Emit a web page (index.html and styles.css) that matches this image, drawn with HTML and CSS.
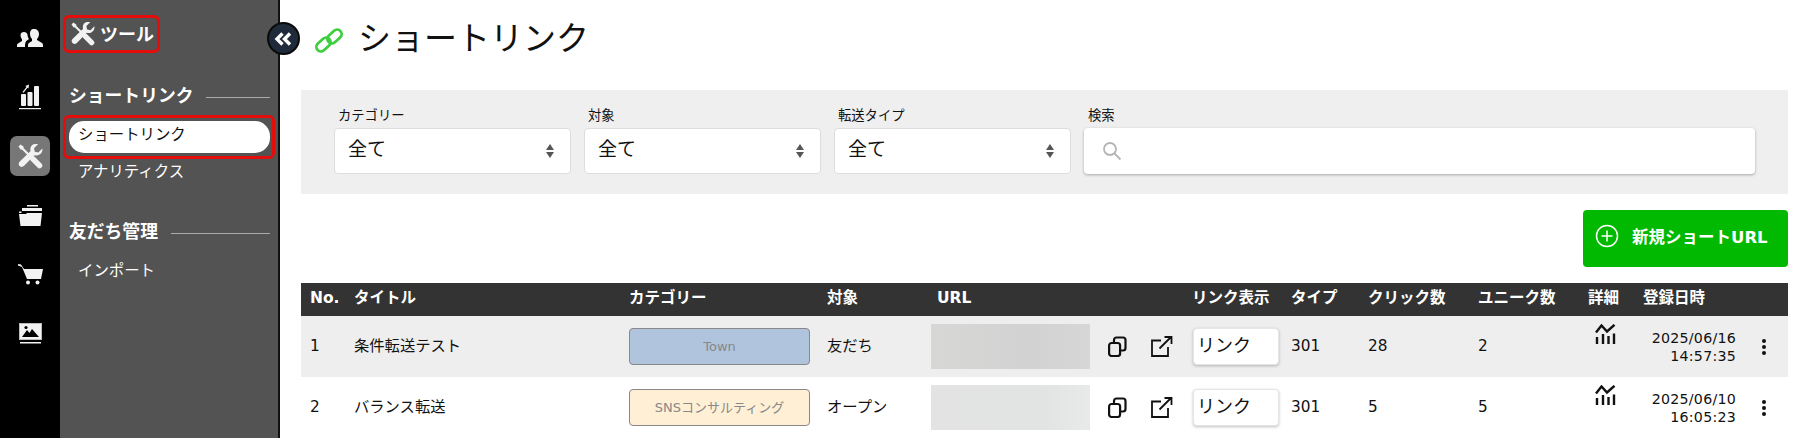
FILE: index.html
```html
<!DOCTYPE html>
<html lang="ja">
<head>
    <meta charset="UTF-8">
    <title>ショートリンク</title>
    <link rel="stylesheet" href="styles.css">
</head>
<body>
    <div class="app">
        <!-- icon rail -->
        <nav class="rail">
            <a class="rail-item">
                <svg width="26" height="20" viewBox="0 0 26 20" fill="#f2f2f2"><path d="M17 1c3 0 5 2 5 5 0 2-1 4-2 5v1l5 3c1 .5 1 2 1 4H11c0-2 0-3.500 1-4l3-2v-2c-1-1-2-3-2-5 0-3 1-5 4-5z"/><path d="M7 4c2 0 3 1 3.500 2.500C10.500 8 11 10 12 11l-2 1.500c-1 .5-2 2-2 6.500H0c0-2 0-3 1-3.500l4-2.500v-1.500C4 10 3.500 8.500 3.500 7 3.500 5 5 4 7 4z"/></svg>
            </a>
            <a class="rail-item">
                <svg width="22" height="26" viewBox="0 0 22 26" fill="#f2f2f2"><rect x="2" y="10" width="5" height="12" rx="1"/><rect x="8.500" y="8" width="5" height="14" rx="1"/><rect x="15" y="2" width="5" height="20" rx="1"/><path d="M3.500 8l4-5-1.200-1L10 .5 9.500 4.500 8.500 3.700l-4 5z"/><rect x="0" y="24" width="22" height="1.200"/></svg>
            </a>
            <a class="rail-item active">
                <svg width="25" height="25" viewBox="0 0 25 25"><use href="#tools"/></svg>
            </a>
            <a class="rail-item">
                <svg width="25" height="21" viewBox="0 0 25 21" fill="#f2f2f2"><rect x="9" y="0" width="11" height="1.500"/><path d="M4 3h20v3H4z"/><path d="M1 6.500h2.500V8H1z"/><path d="M1 9h7l1-1h15l-1.500 13H2.500z"/></svg>
            </a>
            <a class="rail-item">
                <svg width="25" height="21" viewBox="0 0 25 21" fill="#f2f2f2"><path d="M0 0l3 .5 3 4.500h19l-2 10H9L4 3 0 1.500z"/><circle cx="10" cy="18.500" r="2"/><circle cx="19.500" cy="18.500" r="2"/></svg>
            </a>
            <a class="rail-item">
                <svg width="23" height="21" viewBox="0 0 23 21"><rect x="0.500" y="0.500" width="22" height="16" fill="#f2f2f2" stroke="#bbb"/><path d="M3 14l5-7 2.500 3L13 6l7 8z" fill="#000"/><circle cx="7" cy="4.500" r="1.600" fill="#000"/><rect x="1" y="19" width="21" height="1.500" fill="#f2f2f2"/></svg>
            </a>
        </nav>

        <!-- side menu -->
        <aside class="side">
            <div class="side-title mark">
                <svg width="24" height="24" viewBox="0 0 25 25"><use href="#tools"/></svg>
                <span>ツール</span>
            </div>
            <div class="side-head"><span>ショートリンク</span></div>
            <div class="side-active mark"><a>ショートリンク</a></div>
            <a class="side-link">アナリティクス</a>
            <div class="side-head second"><span>友だち管理</span></div>
            <a class="side-link">インポート</a>
            <button class="collapse" type="button">
                <svg width="19" height="14" viewBox="0 0 19 14" fill="none" stroke="#fff" stroke-width="3.400"><path d="M8.500 1.500L3 7l5.500 5.500M16 1.500L10.500 7l5.500 5.500"/></svg>
            </button>
        </aside>

        <main class="main">
            <h1 class="page-title">
                <svg width="30" height="25" viewBox="0 0 30 25" fill="none" stroke="#3fce3f" stroke-width="2.800">
                    <rect x="1.500" y="12" width="16" height="9" rx="4.500" transform="rotate(-42 9.500 16.500)"/>
                    <rect x="12.500" y="4" width="16" height="9" rx="4.500" transform="rotate(-42 20.500 8.500)"/>
                </svg>
                ショートリンク
            </h1>

            <form class="filters">
                <div class="field">
                    <label>カテゴリー</label>
                    <div class="select-wrap"><select><option>全て</option></select></div>
                </div>
                <div class="field">
                    <label>対象</label>
                    <div class="select-wrap"><select><option>全て</option></select></div>
                </div>
                <div class="field">
                    <label>転送タイプ</label>
                    <div class="select-wrap"><select><option>全て</option></select></div>
                </div>
                <div class="field search">
                    <label>検索</label>
                    <div class="search-box">
                        <svg width="20" height="20" viewBox="0 0 20 20" fill="none" stroke="#b5b5b5" stroke-width="1.800"><circle cx="8" cy="8" r="6"/><path d="M12.500 12.500l6 6"/></svg>
                        <input type="text">
                    </div>
                </div>
            </form>

            <div class="actions">
                <button class="btn-new" type="button">
                    <svg width="24" height="24" viewBox="0 0 24 24" fill="none" stroke="#fff" stroke-width="1.500"><circle cx="12" cy="12" r="10.500"/><path d="M12 6.500v11M6.500 12h11"/></svg>
                    新規ショートURL
                </button>
            </div>

            <table class="links">
                <colgroup>
                    <col class="c-no"><col class="c-title"><col class="c-cat"><col class="c-target"><col class="c-url">
                    <col class="c-tools"><col class="c-show"><col class="c-type"><col class="c-count"><col class="c-count">
                    <col class="c-detail"><col class="c-date"><col class="c-more">
                </colgroup>
                <thead>
                    <tr>
                        <th>No.</th><th>タイトル</th><th>カテゴリー</th><th>対象</th><th class="th-url">URL</th><th></th>
                        <th>リンク表示</th><th>タイプ</th><th>クリック数</th><th>ユニーク数</th><th>詳細</th><th>登録日時</th><th></th>
                    </tr>
                </thead>
                <tbody>
                    <tr class="odd">
                        <td>1</td>
                        <td>条件転送テスト</td>
                        <td class="box"><span class="tag tag-blue">Town</span></td>
                        <td>友だち</td>
                        <td class="box td-url"><div class="url-mask mask-dark"></div></td>
                        <td class="box td-tools"><div class="url-tools">
                            <svg width="19" height="21"><use href="#copy"/></svg>
                            <svg width="22" height="21"><use href="#open"/></svg>
                        </div></td>
                        <td class="box td-show"><select class="show-select"><option>リンク</option></select></td>
                        <td>301</td>
                        <td>28</td>
                        <td>2</td>
                        <td class="box td-detail"><svg width="21" height="21"><use href="#stats"/></svg></td>
                        <td class="box td-date">2025/06/16<br>14:57:35</td>
                        <td class="box td-more"><span class="dots"></span></td>
                    </tr>
                    <tr>
                        <td>2</td>
                        <td>バランス転送</td>
                        <td class="box"><span class="tag tag-cream">SNSコンサルティング</span></td>
                        <td>オープン</td>
                        <td class="box td-url"><div class="url-mask mask-light"></div></td>
                        <td class="box td-tools"><div class="url-tools">
                            <svg width="19" height="21"><use href="#copy"/></svg>
                            <svg width="22" height="21"><use href="#open"/></svg>
                        </div></td>
                        <td class="box td-show"><select class="show-select"><option>リンク</option></select></td>
                        <td>301</td>
                        <td>5</td>
                        <td>5</td>
                        <td class="box td-detail"><svg width="21" height="21"><use href="#stats"/></svg></td>
                        <td class="box td-date">2025/06/10<br>16:05:23</td>
                        <td class="box td-more"><span class="dots"></span></td>
                    </tr>
                </tbody>
            </table>
        </main>
    </div>

    <!-- shared icons -->
    <svg class="defs" width="0" height="0">
        <defs>
            <g id="tools">
                <path d="M3 3l8.500 8.500" fill="none" stroke="#f2f2f2" stroke-width="2.200"/>
                <path d="M0.500 2.500L2.500 .5 6 3 3 6z" fill="#f2f2f2"/>
                <path d="M15 15l6.500 6.500" fill="none" stroke="#f2f2f2" stroke-width="5.500" stroke-linecap="round"/>
                <path d="M24.300 4.500l-4 4-3.500-.8-.8-3.500 4-4c-2.800-.8-5.500 0-6.800 2-1 1.500-1.100 3.200-.6 4.800L1.800 17.500c-1.500 1.500-1.500 3.200-.2 4.500s3 1.300 4.500-.2L16.500 11.300c1.800.5 3.500.3 5-.7 2.200-1.500 3.300-3.500 2.800-6.100z" fill="#f2f2f2"/>
            </g>
            <g id="copy" fill="none" stroke="#111" stroke-width="2.200">
                <rect x="1.100" y="7" width="11" height="13" rx="2.500"/>
                <path d="M6 7V4c0-1.500 1-2.500 2.500-2.500H15c1.500 0 2.500 1 2.500 2.500v8c0 1.500-.7 2.500-2.500 2.500h-3"/>
            </g>
            <g id="open" fill="none" stroke="#111" stroke-width="1.800">
                <path d="M10 4.500H1v15.500h16v-9"/>
                <path d="M8.500 12.500L19.500 1.500M13.500 1h7v7"/>
            </g>
            <g id="stats" fill="none" stroke="#111">
                <path d="M1 8.500L6.500 1.500 12 7.500 19.500 .8" stroke-width="2.400"/>
                <path d="M2 13v7M8 10v10M13.500 12v8M19 9.500v10.500" stroke-width="2.400"/>
            </g>
        </defs>
    </svg>
</body>
</html>
```

FILE: styles.css
```css
* {
    box-sizing: border-box;
}
html, body {
    height: 100%;
}
body {
    margin: 0;
    overflow: hidden;
    background-color: #fff;
    color: #111;
    font-family: "DejaVu Sans", "Noto Sans CJK JP", sans-serif;
    font-size: 15px;
}
.defs {
    position: absolute;
}
.app {
    display: flex;
    height: 100%;
}

/* icon rail */
.rail {
    width: 60px;
    flex: none;
    background-color: #000;
    padding-top: 18px;
    display: flex;
    flex-direction: column;
    align-items: center;
    gap: 19px;
}
.rail-item {
    width: 40px;
    height: 40px;
    display: flex;
    align-items: center;
    justify-content: center;
    border-radius: 7px;
}
.rail-item.active {
    background-color: #777;
}

/* side menu */
.side {
    position: relative;
    width: 220px;
    flex: none;
    background-color: #535353;
    border-right: 2px solid #111;
    padding: 15px 3px 0;
    color: #fff;
}
.mark {
    border: 3px solid #e50c0c;
    border-radius: 6px;
}
.side-title {
    width: 97px;
    height: 38px;
    display: flex;
    align-items: center;
    gap: 5px;
    padding: 0 0 0 5px;
    font-size: 18px;
    font-weight: bold;
}
.side-title span {
    margin-top: -3px;
}
.side-head {
    display: flex;
    align-items: center;
    gap: 13px;
    margin: 29px 5px 0 6px;
    font-size: 17.800px;
    font-weight: bold;
    line-height: 27px;
}
.side-head::after {
    content: "";
    flex: 1;
    height: 1px;
    background-color: #aaa;
    margin-top: 3px;
}
.side-head.second {
    margin-top: 31px;
}
.side-active {
    margin-top: 6px;
    width: 212px;
    height: 44px;
    padding: 3px;
}
.side-active a {
    display: block;
    height: 32px;
    width: 201px;
    border-radius: 15px;
    background-color: #fff;
    color: #111;
    padding-left: 9px;
    font-size: 15.400px;
    line-height: 29px;
}
.side-link {
    display: block;
    margin-left: 15px;
    font-size: 15.400px;
    line-height: 26px;
    height: 28px;
}
.side-head.second + .side-link {
    margin-top: 13px;
}
.collapse {
    position: absolute;
    top: 22px;
    right: -22px;
    width: 33px;
    height: 33px;
    border-radius: 50%;
    border: 2px solid #0a0a0a;
    background-color: #1f2b3b;
    padding: 0;
    display: flex;
    align-items: center;
    justify-content: center;
}

/* main */
.main {
    flex: 1;
    min-width: 0;
    padding: 0 22px 0 21px;
}
.page-title {
    margin: 0;
    height: 90px;
    padding: 18px 0 0 13px;
    display: flex;
    align-items: flex-start;
    gap: 14px;
    font-size: 33px;
    font-weight: normal;
    line-height: 42px;
}
.page-title svg {
    margin-top: 10px;
}
.filters {
    height: 104px;
    background-color: #efefef;
    padding: 16px 33px 0 33px;
    display: flex;
    gap: 13px;
}
.field {
    width: 237px;
}
.field label {
    display: block;
    height: 22px;
    padding-left: 4px;
    font-size: 13.300px;
    line-height: 20px;
}
.field.search {
    flex: 1;
}
.select-wrap {
    position: relative;
}
.select-wrap::before,
.select-wrap::after {
    content: "";
    position: absolute;
    right: 17px;
    border-left: 4px solid transparent;
    border-right: 4px solid transparent;
}
.select-wrap::before {
    top: 16px;
    border-bottom: 6px solid #555;
}
.select-wrap::after {
    top: 24px;
    border-top: 6px solid #555;
}
.select-wrap select {
    width: 100%;
    height: 46px;
    appearance: none;
    background-color: #fff;
    border: 1px solid #ddd;
    border-radius: 4px;
    padding: 0 0 5px 13px;
    color: #111;
    font-family: inherit;
    font-size: 19px;
}
.search-box {
    height: 46px;
    display: flex;
    align-items: center;
    gap: 8px;
    padding-left: 18px;
    background-color: #fff;
    border-radius: 4px;
    box-shadow: 0 1px 3px rgba(0,0,0,0.3);
}
.search-box input {
    flex: 1;
    border: none;
    outline: none;
    background: none;
    font-size: 16px;
}
.actions {
    display: flex;
    justify-content: flex-end;
    margin-top: 16px;
    height: 73px;
}
.btn-new {
    width: 205px;
    height: 57px;
    border: none;
    border-radius: 4px;
    background-color: #00b900;
    color: #fff;
    display: flex;
    align-items: center;
    gap: 13px;
    padding: 0 0 5px 12px;
    font-family: inherit;
    font-size: 16.500px;
    font-weight: bold;
    white-space: nowrap;
}

/* table */
.links {
    width: 1487px;
    table-layout: fixed;
    border-collapse: collapse;
}
.c-no { width: 44px; }
.c-title { width: 275px; }
.c-cat { width: 198px; }
.c-target { width: 107px; }
.c-url { width: 175px; }
.c-tools { width: 83px; }
.c-show { width: 99px; }
.c-type { width: 77px; }
.c-count { width: 110px; }
.c-detail { width: 55px; }
.c-date { width: 111px; }
.c-more { width: 43px; }
.links th {
    height: 33px;
    padding: 0 0 3px 9px;
    background-color: #333;
    color: #fff;
    font-size: 15.500px;
    font-weight: bold;
    line-height: 20px;
    text-align: left;
    white-space: nowrap;
}
.links th.th-url {
    padding-left: 12px;
}
.links td {
    height: 61px;
    padding: 0 0 2px 9px;
    font-size: 15.300px;
    line-height: 20px;
    white-space: nowrap;
}
.links td.box {
    padding-bottom: 0;
}
.links tr.odd td {
    background-color: #eee;
}
.tag {
    display: block;
    width: 181px;
    height: 37px;
    border: 1px solid #888;
    border-radius: 4px;
    color: #888;
    font-size: 13px;
    line-height: 35px;
    text-align: center;
}
.tag-blue {
    background-color: #b0c4de;
}
.tag-cream {
    background-color: #ffefd5;
}
.links td.td-url {
    padding-left: 6px;
}
.url-mask {
    width: 159px;
    height: 45px;
}
.mask-dark {
    background: linear-gradient(90deg, #d7d7d6, #d2d2d2 60%, #d6d6d6);
}
.mask-light {
    background: linear-gradient(90deg, #e3e3e3, #e2e3e3 70%, #e8eaea);
}
.links td.td-tools {
    padding-left: 8px;
}
.url-tools {
    display: flex;
    align-items: center;
    gap: 24px;
}
.links td.td-show {
    padding-left: 10px;
}
.show-select {
    width: 86px;
    height: 37px;
    appearance: none;
    background-color: #fff;
    border: 1px solid #e6e6e6;
    border-radius: 4px;
    box-shadow: 0 1px 3px rgba(0,0,0,0.25);
    padding: 0 0 2px 3px;
    color: #111;
    font-family: inherit;
    font-size: 18px;
}
.td-detail svg {
    display: block;
    margin: -23px 0 0 7px;
}
.links td.td-date {
    font-size: 14.200px;
    letter-spacing: 0.250px;
    line-height: 18px;
    text-align: right;
    padding: 0 9px 0 0;
}
.td-more {
    text-align: center;
}
.dots,
.dots::before,
.dots::after {
    display: block;
    width: 4px;
    height: 4px;
    border-radius: 50%;
    background-color: #111;
}
.dots {
    position: relative;
    margin-left: 8px;
}
.dots::before,
.dots::after {
    content: "";
    position: absolute;
    left: 0;
}
.dots::before {
    top: -6px;
}
.dots::after {
    top: 6px;
}
```
